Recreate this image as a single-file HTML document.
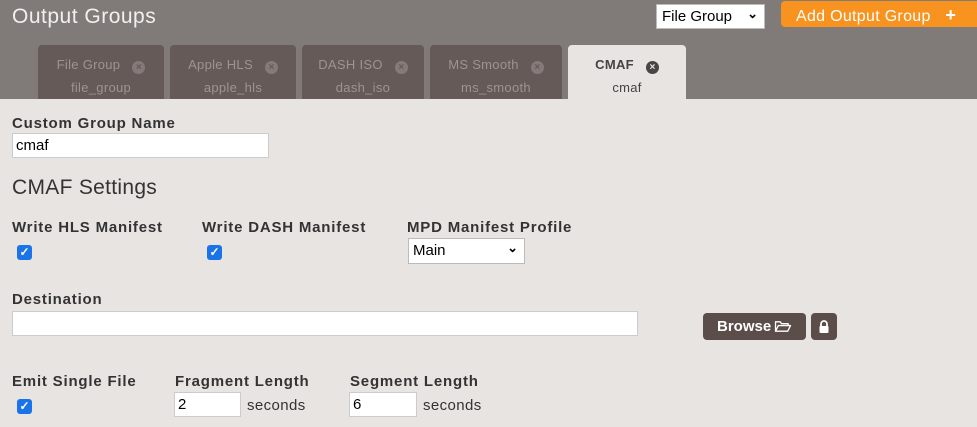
<!DOCTYPE html>
<html><head><style>
*{box-sizing:border-box;margin:0;padding:0}
body{width:977px;height:427px;background:#e8e4e2;font-family:"Liberation Sans",sans-serif;position:relative;overflow:hidden;color:#333}
.a{position:absolute}
.hdr{left:0;top:0;width:977px;height:99px;background:#807b79}
.tab{top:45px;height:54px;background:#655a57;border-radius:4px 4px 0 0;color:#9d9391;font-size:13px;letter-spacing:0.3px;text-align:center}
.tab .t{position:absolute;top:12px;left:0;width:100%}
.tab .s{position:absolute;top:35px;left:0;width:100%}
.x{display:inline-block;width:13px;height:13px;border-radius:50%;background:#85797a;color:#655a57;font-size:10px;line-height:13px;font-weight:bold;margin-left:12px;vertical-align:-1px;letter-spacing:0}
.lbl{font-size:15px;font-weight:bold;color:#333;letter-spacing:0.8px}
.inp{background:#fff;border:1px solid #ccc;font-size:15px;padding:3px 3px;color:#000}
.cb{width:15px;height:15px;background:#1a73e8;border-radius:3px;color:#fff;font-size:12px;line-height:15px;text-align:center;font-weight:bold}
.sel{background:#fff;border:1px solid #bbb;font-size:15px;color:#000;padding:3px 4px}
.sec{font-size:15px;color:#333;letter-spacing:0.4px}
</style></head><body>
<div class="a hdr"></div>
<div class="a" style="left:12px;top:5px;font-size:21px;letter-spacing:0.5px;color:#f2f0ef">Output Groups</div>
<div class="a sel" style="left:656px;top:4px;width:109px;height:25px;padding:3px 5px">File Group<span style="position:absolute;right:6px;top:1px;font-size:13px;font-weight:bold">&#8964;</span></div>
<div class="a" style="left:781px;top:1px;width:196px;height:26px;background:#f7931e;border-radius:4px 0 0 4px;color:#fff;font-size:16px;letter-spacing:0.3px;padding:4px 0 0 15px">Add Output Group <b style="margin-left:10px;font-size:18px">+</b></div>
<div class="a tab" style="left:38px;width:126px"><div class="t">File Group<span class="x">×</span></div><div class="s">file_group</div></div>
<div class="a tab" style="left:170px;width:126px"><div class="t">Apple HLS<span class="x">×</span></div><div class="s">apple_hls</div></div>
<div class="a tab" style="left:302px;width:122px"><div class="t">DASH ISO<span class="x">×</span></div><div class="s">dash_iso</div></div>
<div class="a tab" style="left:430px;width:132px"><div class="t">MS Smooth<span class="x">×</span></div><div class="s">ms_smooth</div></div>
<div class="a tab" style="left:568px;width:118px;background:#e8e4e2;color:#444"><div class="t" style="font-weight:bold">CMAF<span class="x" style="background:#4a4444;color:#e8e4e2">×</span></div><div class="s">cmaf</div></div>

<div class="a lbl" style="left:12px;top:115px">Custom Group Name</div>
<div class="a inp" style="left:12px;top:133px;width:257px;height:25px">cmaf</div>
<div class="a" style="left:12px;top:176px;font-size:21px;letter-spacing:0.3px;color:#333">CMAF Settings</div>

<div class="a lbl" style="left:12px;top:219px">Write HLS Manifest</div>
<div class="a lbl" style="left:202px;top:219px">Write DASH Manifest</div>
<div class="a lbl" style="left:407px;top:219px">MPD Manifest Profile</div>
<div class="a cb" style="left:17px;top:245px">✓</div>
<div class="a cb" style="left:207px;top:245px">✓</div>
<div class="a sel" style="left:408px;top:238px;width:117px;height:26px">Main<span style="position:absolute;right:6px;top:1px;font-size:13px;font-weight:bold">&#8964;</span></div>

<div class="a lbl" style="left:12px;top:291px">Destination</div>
<div class="a inp" style="left:12px;top:311px;width:626px;height:25px"></div>
<div class="a" style="left:703px;top:313px;width:103px;height:27px;background:#5a4d4a;border-radius:4px;color:#fff;font-size:15px;font-weight:bold;padding:5px 0 0 14px">Browse</div>
<svg class="a" style="left:774px;top:319px" width="19" height="15" viewBox="0 0 20 16"><path d="M1.5 13V3h5l1.5 2h7v2M1.5 13l3-6h13l-3 6z" stroke="#fff" stroke-width="1.4" fill="none" stroke-linejoin="round"/></svg>
<div class="a" style="left:811px;top:313px;width:26px;height:27px;background:#5a4d4a;border-radius:4px">
<svg width="26" height="27" viewBox="0 0 26 27"><path d="M10 13v-2a3 3 0 0 1 6 0v2" stroke="#fff" stroke-width="1.8" fill="none"/><rect x="8.5" y="13" width="9" height="7" rx="1" fill="#fff"/></svg></div>

<div class="a lbl" style="left:12px;top:373px">Emit Single File</div>
<div class="a lbl" style="left:175px;top:373px">Fragment Length</div>
<div class="a lbl" style="left:350px;top:373px">Segment Length</div>
<div class="a cb" style="left:17px;top:399px">✓</div>
<div class="a inp" style="left:174px;top:392px;width:67px;height:25px">2</div>
<div class="a sec" style="left:247px;top:397px">seconds</div>
<div class="a inp" style="left:349px;top:392px;width:68px;height:25px">6</div>
<div class="a sec" style="left:423px;top:397px">seconds</div>
</body></html>
